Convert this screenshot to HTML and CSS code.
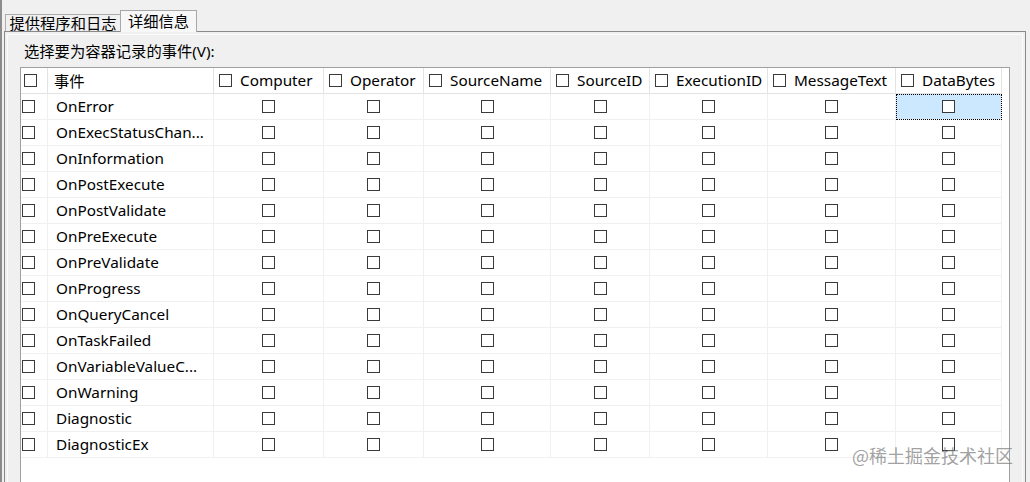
FILE: index.html
```html
<!DOCTYPE html>
<html>
<head>
<meta charset="utf-8">
<link rel="stylesheet" href="styles.css">
</head>
<body>
<div class="window">
  <div class="tabstrip">
    <div class="tab">提供程序和日志</div>
    <div class="tab active">详细信息</div>
  </div>
  <div class="page">
    <div class="label">选择要为容器记录的事件(V):</div>
    <div class="grid">
      <div class="gtable">
        <div class="hc c0"><span class="cb"></span></div>
        <div class="hc c1">事件</div>
        <div class="hc"><span class="cb"></span><span class="ht">Computer</span></div>
        <div class="hc"><span class="cb"></span><span class="ht">Operator</span></div>
        <div class="hc"><span class="cb"></span><span class="ht">SourceName</span></div>
        <div class="hc"><span class="cb"></span><span class="ht">SourceID</span></div>
        <div class="hc"><span class="cb"></span><span class="ht">ExecutionID</span></div>
        <div class="hc"><span class="cb"></span><span class="ht">MessageText</span></div>
        <div class="hc"><span class="cb"></span><span class="ht">DataBytes</span></div>

        <div class="dc c0"><span class="cb"></span></div><div class="dc c1">OnError</div><div class="dc"><span class="cb"></span></div><div class="dc"><span class="cb"></span></div><div class="dc"><span class="cb"></span></div><div class="dc"><span class="cb"></span></div><div class="dc"><span class="cb"></span></div><div class="dc"><span class="cb"></span></div><div class="dc sel"><span class="cb"></span></div>
        <div class="dc c0"><span class="cb"></span></div><div class="dc c1">OnExecStatusChan...</div><div class="dc"><span class="cb"></span></div><div class="dc"><span class="cb"></span></div><div class="dc"><span class="cb"></span></div><div class="dc"><span class="cb"></span></div><div class="dc"><span class="cb"></span></div><div class="dc"><span class="cb"></span></div><div class="dc"><span class="cb"></span></div>
        <div class="dc c0"><span class="cb"></span></div><div class="dc c1">OnInformation</div><div class="dc"><span class="cb"></span></div><div class="dc"><span class="cb"></span></div><div class="dc"><span class="cb"></span></div><div class="dc"><span class="cb"></span></div><div class="dc"><span class="cb"></span></div><div class="dc"><span class="cb"></span></div><div class="dc"><span class="cb"></span></div>
        <div class="dc c0"><span class="cb"></span></div><div class="dc c1">OnPostExecute</div><div class="dc"><span class="cb"></span></div><div class="dc"><span class="cb"></span></div><div class="dc"><span class="cb"></span></div><div class="dc"><span class="cb"></span></div><div class="dc"><span class="cb"></span></div><div class="dc"><span class="cb"></span></div><div class="dc"><span class="cb"></span></div>
        <div class="dc c0"><span class="cb"></span></div><div class="dc c1">OnPostValidate</div><div class="dc"><span class="cb"></span></div><div class="dc"><span class="cb"></span></div><div class="dc"><span class="cb"></span></div><div class="dc"><span class="cb"></span></div><div class="dc"><span class="cb"></span></div><div class="dc"><span class="cb"></span></div><div class="dc"><span class="cb"></span></div>
        <div class="dc c0"><span class="cb"></span></div><div class="dc c1">OnPreExecute</div><div class="dc"><span class="cb"></span></div><div class="dc"><span class="cb"></span></div><div class="dc"><span class="cb"></span></div><div class="dc"><span class="cb"></span></div><div class="dc"><span class="cb"></span></div><div class="dc"><span class="cb"></span></div><div class="dc"><span class="cb"></span></div>
        <div class="dc c0"><span class="cb"></span></div><div class="dc c1">OnPreValidate</div><div class="dc"><span class="cb"></span></div><div class="dc"><span class="cb"></span></div><div class="dc"><span class="cb"></span></div><div class="dc"><span class="cb"></span></div><div class="dc"><span class="cb"></span></div><div class="dc"><span class="cb"></span></div><div class="dc"><span class="cb"></span></div>
        <div class="dc c0"><span class="cb"></span></div><div class="dc c1">OnProgress</div><div class="dc"><span class="cb"></span></div><div class="dc"><span class="cb"></span></div><div class="dc"><span class="cb"></span></div><div class="dc"><span class="cb"></span></div><div class="dc"><span class="cb"></span></div><div class="dc"><span class="cb"></span></div><div class="dc"><span class="cb"></span></div>
        <div class="dc c0"><span class="cb"></span></div><div class="dc c1">OnQueryCancel</div><div class="dc"><span class="cb"></span></div><div class="dc"><span class="cb"></span></div><div class="dc"><span class="cb"></span></div><div class="dc"><span class="cb"></span></div><div class="dc"><span class="cb"></span></div><div class="dc"><span class="cb"></span></div><div class="dc"><span class="cb"></span></div>
        <div class="dc c0"><span class="cb"></span></div><div class="dc c1">OnTaskFailed</div><div class="dc"><span class="cb"></span></div><div class="dc"><span class="cb"></span></div><div class="dc"><span class="cb"></span></div><div class="dc"><span class="cb"></span></div><div class="dc"><span class="cb"></span></div><div class="dc"><span class="cb"></span></div><div class="dc"><span class="cb"></span></div>
        <div class="dc c0"><span class="cb"></span></div><div class="dc c1">OnVariableValueC...</div><div class="dc"><span class="cb"></span></div><div class="dc"><span class="cb"></span></div><div class="dc"><span class="cb"></span></div><div class="dc"><span class="cb"></span></div><div class="dc"><span class="cb"></span></div><div class="dc"><span class="cb"></span></div><div class="dc"><span class="cb"></span></div>
        <div class="dc c0"><span class="cb"></span></div><div class="dc c1">OnWarning</div><div class="dc"><span class="cb"></span></div><div class="dc"><span class="cb"></span></div><div class="dc"><span class="cb"></span></div><div class="dc"><span class="cb"></span></div><div class="dc"><span class="cb"></span></div><div class="dc"><span class="cb"></span></div><div class="dc"><span class="cb"></span></div>
        <div class="dc c0"><span class="cb"></span></div><div class="dc c1">Diagnostic</div><div class="dc"><span class="cb"></span></div><div class="dc"><span class="cb"></span></div><div class="dc"><span class="cb"></span></div><div class="dc"><span class="cb"></span></div><div class="dc"><span class="cb"></span></div><div class="dc"><span class="cb"></span></div><div class="dc"><span class="cb"></span></div>
        <div class="dc c0"><span class="cb"></span></div><div class="dc c1">DiagnosticEx</div><div class="dc"><span class="cb"></span></div><div class="dc"><span class="cb"></span></div><div class="dc"><span class="cb"></span></div><div class="dc"><span class="cb"></span></div><div class="dc"><span class="cb"></span></div><div class="dc"><span class="cb"></span></div><div class="dc"><span class="cb"></span></div>
      </div>
    </div>
  </div>
  <div class="watermark">@稀土掘金技术社区</div>
</div>
</body>
</html>
```

FILE: styles.css
```css
html, body {
  margin: 0;
  padding: 0;
  background: #f0f0f0;
}
body {
  width: 1030px;
  height: 482px;
  overflow: hidden;
  font-family: "Noto Sans", "Noto Sans CJK SC", sans-serif;
  font-size: 15.3px;
  color: #000;
}
.window {
  position: relative;
  height: 482px;
  border-left: 2px solid #8c8c8c;
  box-sizing: border-box;
}
.tabstrip {
  display: flex;
  align-items: flex-end;
  height: 31px;
  padding-left: 3px;
  position: relative;
  z-index: 2;
}
.tab {
  box-sizing: border-box;
  width: 116px;
  height: 17px;
  border: 1px solid #adadad;
  border-bottom: none;
  background: #f0f0f0;
  text-align: center;
  line-height: 16px;
  white-space: nowrap;
}
.tab.active {
  width: 77px;
  height: 22px;
  margin-left: -1px;
  margin-bottom: -1px;
  background: #f7f7f7;
  line-height: 21px;
  border-color: #a8a8a8;
}
.page {
  box-sizing: border-box;
  margin-left: 2px;
  width: 1022px;
  height: 460px;
  border: 1px solid #898989;
  box-shadow: inset 0 0 0 2px #f0f0f0, inset 0 0 0 3px #fbfbfb;
  padding: 9px 0 0 15px;
  position: relative;
  z-index: 1;
}
.label {
  padding-left: 4px;
  line-height: 20px;
  height: 26px;
  white-space: nowrap;
}
.grid {
  box-sizing: border-box;
  width: 990px;
  height: 430px;
  border: 1px solid #a0a0a0;
  background: #fff;
}
.gtable {
  display: grid;
  grid-template-columns: 27px 166px 110px 100px 127px 99px 118px 128px 106px;
  grid-auto-rows: 26px;
}
.hc, .dc {
  box-sizing: border-box;
  display: flex;
  align-items: center;
  white-space: nowrap;
  overflow: hidden;
}
.hc {
  background: #fff;
  border-right: 1px solid #e3e3e3;
  border-bottom: 1px solid #e3e3e3;
  padding-left: 5px;
}
.hc.c0 {
  padding-left: 3px;
}
.hc.c1 {
  padding-left: 6px;
  padding-bottom: 2px;
}
.ht {
  margin-left: 8px;
  position: relative;
  top: -1px;
}
.dc {
  border-right: 1px solid #f0f0f0;
  border-bottom: 1px solid #f0f0f0;
  justify-content: center;
}
.dc.c0 {
  justify-content: flex-start;
  padding-left: 1px;
}
.dc.c1 {
  justify-content: flex-start;
  padding-left: 8px;
  padding-bottom: 2px;
}
.dc.sel {
  background: #cce8ff;
  outline: 1px dotted #000;
  outline-offset: -1px;
}
.cb {
  display: inline-block;
  box-sizing: border-box;
  width: 13px;
  height: 13px;
  border: 1px solid #3a3a3a;
  background: #fff;
  flex: none;
}
.watermark {
  position: absolute;
  left: 850px;
  top: 442px;
  font-family: "Noto Sans CJK SC", sans-serif;
  font-size: 18px;
  color: rgba(120, 120, 120, 0.7);
  z-index: 3;
  white-space: nowrap;
}
```
